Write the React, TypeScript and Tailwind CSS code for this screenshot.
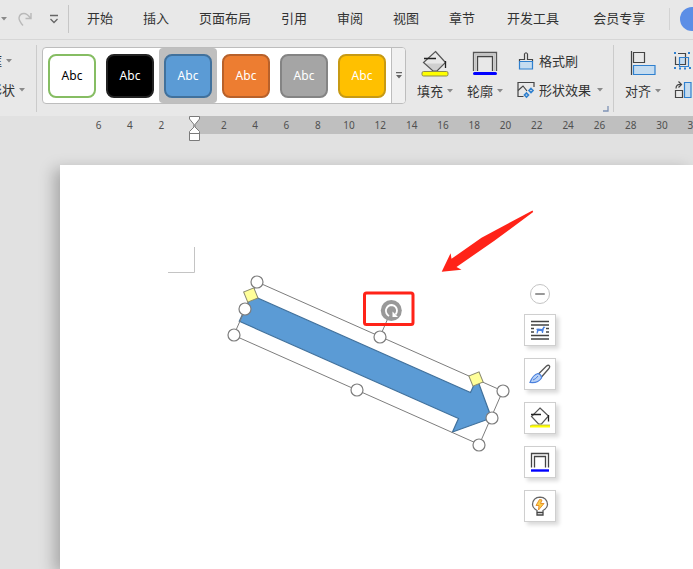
import {useState} from 'react';
import type {ReactNode} from 'react';
import clsx from 'clsx';

interface ISwatch {
  id: string;
  className: string;
}

const mainTabs = ['开始', '插入', '页面布局', '引用', '审阅', '视图', '章节'];
const extraTabs = ['开发工具', '会员专享'];

const swatches: ISwatch[] = [
  {id: 'outline', className: 'border-[#86bd63] bg-white text-black'},
  {id: 'black', className: 'border-[#222222] bg-black text-white'},
  {id: 'blue', className: 'border-[#41719c] bg-[#5b9bd5] text-white'},
  {id: 'orange', className: 'border-[#b8612a] bg-[#ed7d31] text-white'},
  {id: 'gray', className: 'border-[#848484] bg-[#a5a5a5] text-white'},
  {id: 'gold', className: 'border-[#c79a14] bg-[#ffc000] text-white'},
];

const rulerLeft = [6, 4, 2];
const rulerRight = [2, 4, 6, 8, 10, 12, 14, 16, 18, 20, 22, 24, 26, 28, 30, 32];

const handles = [
  [257, 282],
  [245, 309],
  [234, 335],
  [357, 390],
  [380, 337],
  [479, 445],
  [492, 418],
  [503, 391],
];

const Caret = () => (
  <svg width="6" height="4" viewBox="0 0 6 4" className="shrink-0">
    <path d="M0 0H6L3 3.6Z" fill="#8a8a8a" />
  </svg>
);

const Separator = () => <div className="my-1 w-px shrink-0 bg-[#cbcbcb]" />;

const FillIcon = () => (
  <svg width="28" height="27" viewBox="0 0 28 27" fill="none">
    <path d="M4.500 13.500H23L16 21H12Z" fill="#cfcfcf" />
    <path
      d="M14.500 1.500L24.500 12.500L16 21H12L2.500 12.500Z"
      stroke="#555"
      strokeWidth="1.200"
    />
    <path d="M3 8.500H15M24.500 11V18" stroke="#222" strokeWidth="1.300" />
    <rect x="1" y="21.500" width="26" height="4.500" rx="1.500" fill="#ff0" stroke="#8b8b50" />
  </svg>
);

const OutlineIcon = () => (
  <svg width="26" height="27" viewBox="0 0 26 27" fill="none">
    <path d="M1.500 21V2.500H24.500V21" stroke="#555" strokeWidth="1.300" />
    <path d="M5.500 21V6.500H20.500V21" stroke="#444" strokeWidth="1.300" />
    <path d="M3.500 21V4.500H22.500V21" stroke="#c4c4c4" strokeWidth="1.500" />
    <path d="M2.500 23.500H23.500" stroke="#00f" strokeWidth="3" strokeLinecap="round" />
  </svg>
);

const FormatPainterIcon = () => (
  <svg width="18" height="20" viewBox="0 0 18 20" fill="none">
    <path d="M2.500 10.500V8.500H7.500V3Q9 .5 10.500 3V8.500H15.500V10.500" stroke="#444" strokeWidth="1.200" />
    <path d="M2.500 10.500H15.500V18H2.500Z" fill="#c5dcf0" stroke="#2f80cf" strokeWidth="1.200" />
  </svg>
);

const ShapeEffectIcon = () => (
  <svg width="18" height="18" viewBox="0 0 18 18" fill="none">
    <path d="M6.500 15.500H1V1.500H17V6" stroke="#444" strokeWidth="1.200" />
    <path d="M1 9.500L6 5L10 10" stroke="#444" strokeWidth="1.200" />
    <path
      d="M9.500 12L11.500 14L9.500 16L7.500 14ZM14 7.500L16 9.500L14 11.500L12 9.500Z"
      stroke="#2f80cf"
      strokeWidth="1.600"
    />
  </svg>
);

const AlignIcon = () => (
  <svg width="26" height="26" viewBox="0 0 26 26" fill="none">
    <path d="M1.500 1V25" stroke="#444" strokeWidth="1.200" />
    <path d="M3.500 2.500H14.500V12.500H3.500Z" stroke="#444" strokeWidth="1.200" />
    <path d="M3.500 15.500H25V24.500H3.500Z" fill="#c5dcf0" stroke="#2f80cf" strokeWidth="1.200" />
  </svg>
);

const GroupIcon = () => (
  <svg width="20" height="18" viewBox="0 0 20 18" fill="none">
    <path d="M6.500 5.500H12.500V12.500H6.500Z" fill="#c5dcf0" />
    <path d="M6 12.500H2.500V4.500M5 1.500H12.500V12.500H7" stroke="#444" strokeWidth="1.200" />
    <path d="M6.500 5.500H15.500V14.500H6.500Z" stroke="#2f80cf" strokeWidth="1.200" />
    <path
      d="M1 0H3V2H1ZM1 15H3V17H1ZM6 15.500H8V17.500H6ZM11 15.500H13V17.500H11ZM15 0H17V2H15ZM16 15H18V17H16Z"
      fill="#2f80cf"
    />
  </svg>
);

const RotateIcon = () => (
  <svg width="20" height="18" viewBox="0 0 20 18" fill="none">
    <path d="M9.500 9.500H2.500V16.500H9.500Z" stroke="#444" strokeWidth="1.200" />
    <path d="M3 7.500Q3 3 8 3.500M5.500 .5L8.500 3.500L5.500 6.500" stroke="#444" strokeWidth="1.200" />
    <path d="M11.500 1.500H18V16.500H11.500Z" fill="#c5dcf0" stroke="#2f80cf" strokeWidth="1.200" />
  </svg>
);

const RibbonButton = ({icon, label}: {icon: ReactNode; label: string}) => (
  <button className="flex flex-col items-center gap-1">
    <span className="flex h-7 items-center">{icon}</span>
    <span className="flex items-center gap-1 whitespace-nowrap leading-5">
      {label}
      <Caret />
    </span>
  </button>
);

const TopTabs = () => (
  <nav className="flex h-10 shrink-0 items-center border-b border-[#d6d6d6] pb-0.5 whitespace-nowrap">
    <div className="flex w-[68px] shrink-0 items-center">
      <button aria-label="撤销选项" className="pl-px">
        <Caret />
      </button>
      <button aria-label="重做" className="ml-2.5">
        <svg width="16" height="14" viewBox="0 0 16 14" fill="none" stroke="#b9b9b9" strokeWidth="1.400">
          <path d="M6 13.500Q2 9 2 6Q2.500 1.500 7 1.500Q10 1.500 13.500 6M14 1V6.500H8.500" />
        </svg>
      </button>
      <button aria-label="自定义快速访问工具栏" className="ml-4">
        <svg width="10" height="10" viewBox="0 0 10 10" fill="none" stroke="#666" strokeWidth="1.300">
          <path d="M1 1.500H9M1.500 5L5 8.500L8.500 5" />
        </svg>
      </button>
    </div>
    <div className="h-7 w-px shrink-0 bg-[#c6c6c6]" />
    <div className="ml-[18px] flex gap-[30px]">
      {mainTabs.map((tab) => (
        <button key={tab}>{tab}</button>
      ))}
    </div>
    <div className="ml-8 flex gap-[34px]">
      {extraTabs.map((tab) => (
        <button key={tab}>{tab}</button>
      ))}
    </div>
    <div className="ml-6 h-[22px] w-px shrink-0 bg-[#d3d3d3]" />
    <button aria-label="账户" className="ml-2.5 size-6 shrink-0 rounded-full bg-[#5c8ee6]" />
  </nav>
);

const Ribbon = () => {
  const [selected, setSelected] = useState('blue');

  return (
    <section className="flex h-[76px] shrink-0 pt-px whitespace-nowrap">
      <div className="flex w-9 shrink-0 flex-col overflow-hidden pt-2.5">
        <div className="-ml-[37px] flex w-max flex-col gap-[9px]">
          <button className="flex items-center gap-1 leading-5">
            文本框
            <Caret />
          </button>
          <button className="flex items-center gap-1 leading-5">
            编辑形状
            <Caret />
          </button>
        </div>
      </div>
      <Separator />
      <div className="mt-1.5 ml-[5px] flex h-[57px] shrink-0 overflow-hidden rounded-[4px] border border-[#bdbdbd] bg-white">
        {swatches.map((swatch) => (
          <button
            key={swatch.id}
            onClick={() => setSelected(swatch.id)}
            className={clsx(
              'flex w-[58px] items-center justify-center rounded-[4px]',
              selected === swatch.id && 'bg-[#bfbfbf]',
            )}
          >
            <span
              className={clsx(
                'flex h-11 w-12 items-center justify-center rounded-lg border-2 font-["Noto_Sans"] text-[12px]',
                swatch.className,
              )}
            >
              Abc
            </span>
          </button>
        ))}
        <button
          aria-label="更多样式"
          className="flex w-3.5 items-center justify-center border-l border-[#bdbdbd] bg-[#f0f0f0]"
        >
          <svg width="6" height="7" viewBox="0 0 6 7">
            <path d="M0 0H6V1.200H0ZM0 3H6L3 6.500Z" fill="#666" />
          </svg>
        </button>
      </div>

      <div className="ml-[11px] flex shrink-0 gap-3.5 pt-2">
        <RibbonButton icon={<FillIcon />} label="填充" />
        <RibbonButton icon={<OutlineIcon />} label="轮廓" />
      </div>

      <div className="ml-3.5 flex shrink-0 flex-col gap-[9px] pt-2.5">
        <button className="flex items-center gap-1 leading-5">
          <FormatPainterIcon />
          格式刷
        </button>
        <button className="flex items-center gap-1 leading-5">
          <ShapeEffectIcon />
          形状效果
          <span className="pl-0.5">
            <Caret />
          </span>
        </button>
      </div>
      <button aria-label="形状样式设置" className="mb-1 self-end">
        <svg width="6" height="6" viewBox="0 0 6 6" fill="none">
          <path d="M0 5H5V0" stroke="#7f93b5" strokeWidth="1.300" />
        </svg>
      </button>
      <div className="ml-1 flex">
        <Separator />
      </div>
      <div className="ml-[11px] flex shrink-0 pt-2">
        <RibbonButton icon={<AlignIcon />} label="对齐" />
      </div>
      <div className="ml-3 flex shrink-0 flex-col gap-[11px] pt-[11px]">
        <button aria-label="组合">
          <GroupIcon />
        </button>
        <button aria-label="旋转">
          <RotateIcon />
        </button>
      </div>
    </section>
  );
};

const Ruler = () => (
  <div className="-mr-4 flex h-[18px] shrink-0 pl-[83px] font-['Noto_Sans'] text-[10px] leading-[18px] text-[#505050]">
    <div className="flex flex-[7]">
      {rulerLeft.map((n) => (
        <span key={n} className="flex-[2] text-center">
          {n}
        </span>
      ))}
      <span className="flex-1" />
    </div>
    <div className="relative flex flex-[33] bg-[#bfbfbf]">
      <svg
        width="11"
        height="26"
        viewBox="0 0 11 26"
        className="absolute top-0 -left-1"
        fill="#fff"
        stroke="#7a7a7a"
      >
        <path d="M.5 .5H10.500V3L6 8.500V11L10.500 15.500V24.500H.5V15.500L5 11V8.500L.5 3Z" />
        <path d="M.5 17.500H10.500" />
      </svg>
      <span className="flex-1" />
      {rulerRight.map((n) => (
        <span key={n} className="flex-[2] text-center">
          {n}
        </span>
      ))}
    </div>
  </div>
);

const LayoutOptionsIcon = () => (
  <svg width="20" height="20" viewBox="0 0 20 20" fill="none">
    <path
      d="M1 1.500H19M1 5H19M1 15.500H19M1 19H19M1 8.500H4M1 12H4M16 8.500H19M16 12H19"
      stroke="#444"
      strokeWidth="1.300"
    />
    <path
      d="M6 9L8 8.500L12 9L13.500 6.500L15.500 7L14 8.500L13 13H12L11.500 11H8.500L7.500 13.500H6.500L7 10Z"
      fill="#4a80dd"
    />
  </svg>
);

const BrushIcon = () => (
  <svg width="22" height="20" viewBox="0 0 22 20" fill="none">
    <path
      d="M9.500 10L17.500 2Q19.500 .5 20.500 2Q21.200 3.200 19.500 5L12.500 13"
      stroke="#555"
      strokeWidth="1.300"
    />
    <path
      d="M1 18.500Q4 10.500 9 9.500Q13 11 12.500 14Q9 19.500 1 18.500Z"
      fill="#b9d2f7"
      stroke="#4a80dd"
      strokeWidth="1.200"
    />
    <path d="M4 16Q7 15 9 12" stroke="#4a80dd" />
  </svg>
);

const SmallFillIcon = () => (
  <svg width="22" height="22" viewBox="0 0 22 22" fill="none">
    <path d="M11 1L19.500 9L12.500 17H9.500L2.500 9.500Z" stroke="#555" strokeWidth="1.200" />
    <path d="M2 7.500H12M19.500 8V14.500" stroke="#222" strokeWidth="1.300" />
    <path d="M1 20.500V19L3 18H21V20.500Z" fill="#ff0" />
    <path d="M1 19L3 18H21" stroke="#b5b540" strokeWidth=".8" />
  </svg>
);

const SmallOutlineIcon = () => (
  <svg width="20" height="20" viewBox="0 0 20 20" fill="none">
    <path d="M1.500 15.500V1.500H18.500V15.500" stroke="#444" strokeWidth="1.300" />
    <path d="M4.500 15.500V4.500H15.500V15.500" stroke="#444" strokeWidth="1.300" />
    <path d="M1 18.500H19" stroke="#00f" strokeWidth="2.400" />
  </svg>
);

const BulbIcon = () => (
  <svg width="18" height="20" viewBox="0 0 18 20" fill="none">
    <path
      d="M6 16V14.500Q1.500 12 1.500 8.500Q2 1.500 9 1.200Q16 1.500 16.500 8.500Q16.500 12 12 14.500V16"
      stroke="#666"
      strokeWidth="1.300"
    />
    <path d="M6 16.500H12V19H6Z" stroke="#444" strokeWidth="1.300" />
    <path d="M8.500 3.500L5 9.500H8L7.500 14L13 7.500H9.500L11 4Z" fill="#fbd04a" stroke="#e8912d" />
  </svg>
);

const quickTools = [
  {label: '布局选项', icon: <LayoutOptionsIcon />},
  {label: '形状样式', icon: <BrushIcon />},
  {label: '形状填充', icon: <SmallFillIcon />},
  {label: '形状轮廓', icon: <SmallOutlineIcon />},
  {label: '智能提示', icon: <BulbIcon />},
];

const QuickToolbar = () => {
  const [open, setOpen] = useState(true);

  return (
    <div className="absolute top-[119px] left-[464px] flex flex-col items-center gap-2.5">
      <button
        aria-label="收起"
        onClick={() => setOpen(!open)}
        className="flex size-5 items-center justify-center rounded-full border border-[#c4c4c4] bg-white"
      >
        <span className="h-0.5 w-2.5 rounded-full bg-[#999]" />
      </button>
      {open && (
        <div className="flex flex-col gap-3">
          {quickTools.map((tool) => (
            <button
              key={tool.label}
              aria-label={tool.label}
              className="flex size-8 items-center justify-center border border-[#cfcfcf] bg-white shadow-[3px_3px_4px_rgba(0,0,0,0.15)]"
            >
              {tool.icon}
            </button>
          ))}
        </div>
      )}
    </div>
  );
};

// the drawing uses window coordinates, the page starts at 60,165
const Drawing = () => (
  <svg
    width="500"
    height="300"
    viewBox="60 165 500 300"
    className="absolute top-0 left-0"
    fill="none"
  >
    <path d="M168 272.500H194.500V247" stroke="#c4c4c4" />

    <path
      d="M251.500 295.300L470.500 392.500L477 378.500L491.500 418L452.500 432L458.500 418.500L239.300 321.300Z"
      fill="#5b9bd5"
      stroke="#41719c"
      strokeWidth="1.200"
    />
    <path d="M257.300 282L502.700 391L479.300 444.500L233.700 335.300Z" stroke="#7d7d7d" />
    <path d="M380 336.500L391.300 310.500" stroke="#7d7d7d" />
    <g fill="#ffff99" stroke="#8a8a70">
      <rect x="245.300" y="289.500" width="11" height="11" transform="rotate(-22 250.800 295)" />
      <rect x="470.500" y="373.500" width="11" height="11" transform="rotate(-22 476 379)" />
    </g>
    {handles.map(([x, y]) => (
      <circle key={`${x}-${y}`} cx={x} cy={y} r="6" fill="#fff" stroke="#7d7d7d" strokeWidth="1.200" />
    ))}

    <circle cx="391.300" cy="310.500" r="10.500" fill="#999" />
    <path
      d="M389 316Q385.300 313.500 386 309.500Q387.500 305 391.800 305Q396.800 306 397 310.500Q397 312.500 395.500 314.500"
      stroke="#fff"
      strokeWidth="1.800"
    />
    <path d="M392.500 311.500V317H398Z" fill="#fff" />
    <rect x="364.500" y="293" width="48.500" height="31.500" rx="2" stroke="#ff2318" strokeWidth="3" />
    <path
      d="M532.500 210.500L481.500 237.800L451.500 258.800L450.600 253.200L441.700 271.800L461.500 269.800L456.500 267L494 241L533.200 212Z"
      fill="#ff2318"
    />
  </svg>
);

const App = () => {
  return (
    <div className="flex min-h-screen flex-col overflow-hidden bg-[#e8e8e8] font-['Open_Sans','Noto_Sans_CJK_SC',sans-serif] text-[13px] text-[#333]">
      <TopTabs />
      <Ribbon />
      <main className="flex flex-1 flex-col bg-[#e1e1e1]">
        <Ruler />
        <div className="flex flex-1 flex-col pt-[31px] pl-[60px]">
          <article className="relative min-h-[400px] flex-1 bg-white shadow-[-6px_4px_14px_rgba(0,0,0,0.25)]">
            <Drawing />
            <QuickToolbar />
          </article>
        </div>
      </main>
    </div>
  );
};

export default App;
